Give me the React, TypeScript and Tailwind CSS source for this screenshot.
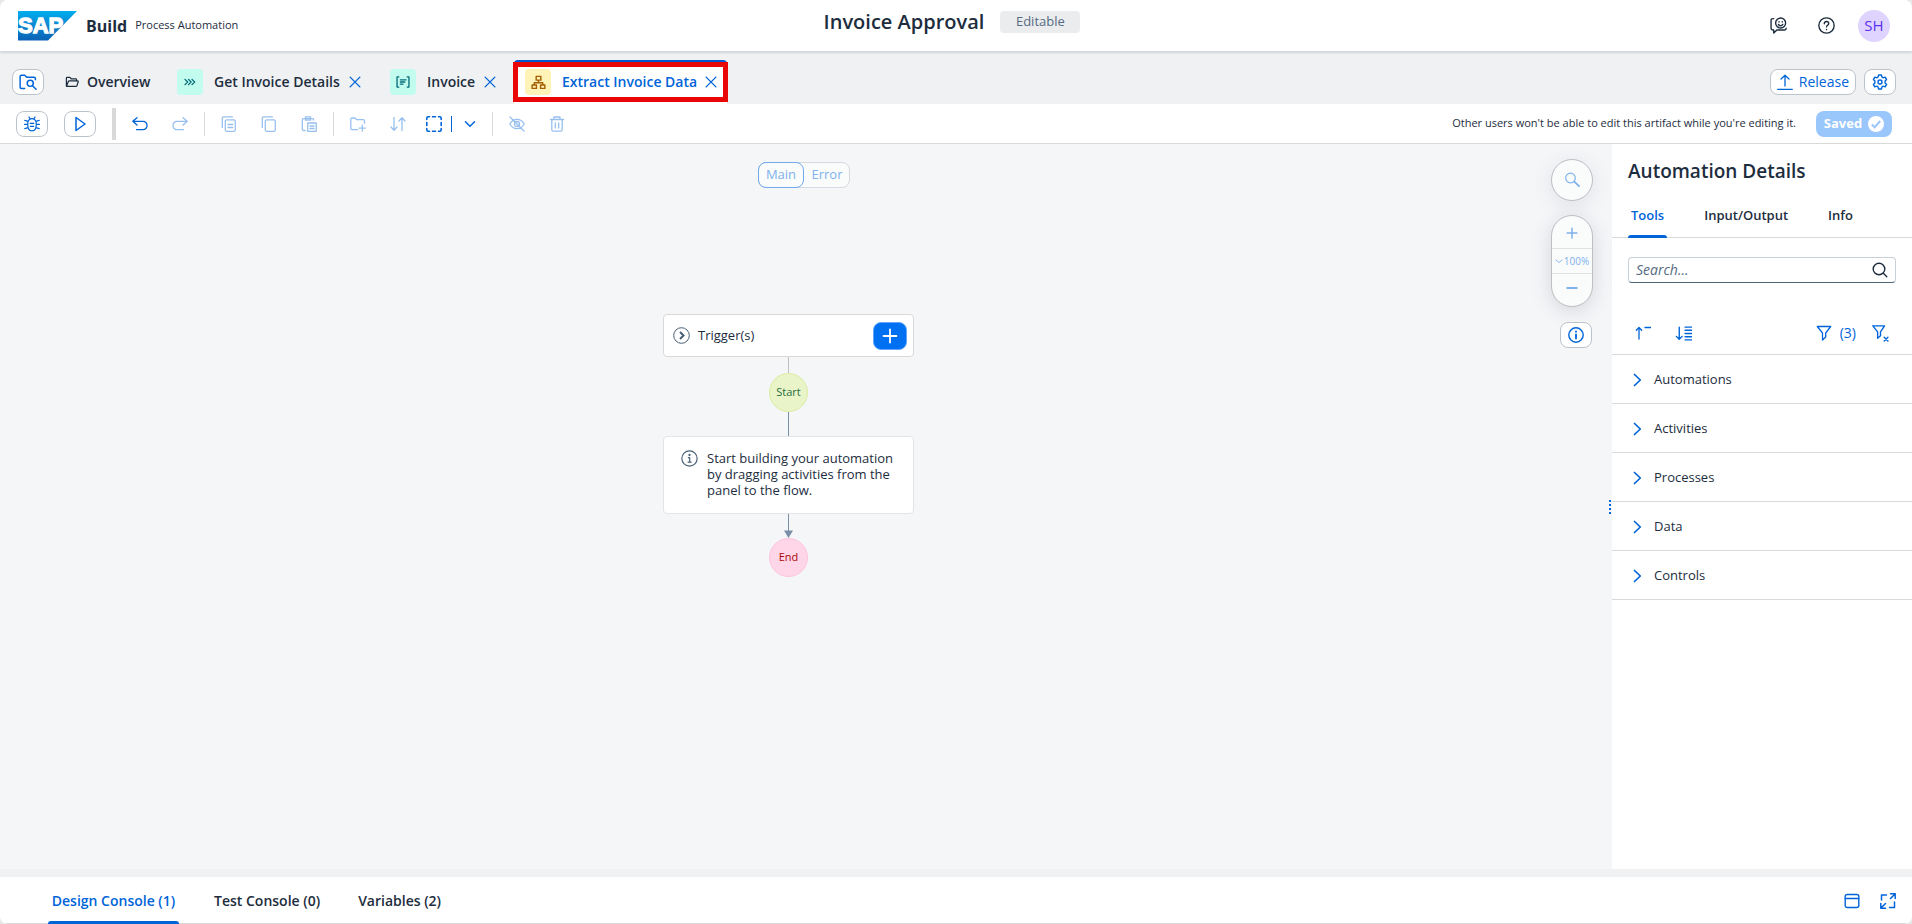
import type { ReactNode } from 'react'

type IconProps = { className?: string; width?: number; children: ReactNode }

function Icon({ className = 'size-4', width = 1.3, children }: IconProps) {
  return (
    <svg
      viewBox="0 0 16 16"
      className={`shrink-0 ${className}`}
      fill="none"
      stroke="currentColor"
      strokeWidth={width}
      strokeLinecap="round"
      strokeLinejoin="round"
      aria-hidden="true"
    >
      {children}
    </svg>
  )
}

const CloseIcon = () => (
  <Icon className="size-3" width={1.8}>
    <path d="M1.500 1.500l13 13M14.500 1.500l-13 13" />
  </Icon>
)

const FolderSearchIcon = () => (
  <Icon className="size-[18px]">
    <path d="M5 13.700H2.300a1.300 1.300 0 0 1-1.300-1.300V3.200C1 2.500 1.500 2 2.200 2h2.900l1.700 1.700h6.600c.7 0 1.200.5 1.200 1.200v1" />
    <circle cx="10" cy="9.200" r="2.700" />
    <path d="M12 11.300l3.200 3.200" />
  </Icon>
)

const FolderOpenIcon = () => (
  <Icon className="size-[14px]" width={1.4}>
    <path d="M1.600 12.600V3.800c0-.6.4-1 1-1h3l1.400 1.500h5.200c.6 0 1 .4 1 1v1.400" />
    <path d="M1.800 13l2-5.500c.2-.5.5-.7 1-.7h9.600c.6 0 .9.400.7 1l-1.500 4.500c-.2.500-.5.700-1 .700H2.200" />
  </Icon>
)

const ProcessIcon = () => (
  <Icon className="size-[14px]" width={1.5}>
    <path d="M2.300 5L5.300 8l-3 3M6.300 5L9.300 8l-3 3M10.300 5L13.300 8l-3 3" />
  </Icon>
)

const FormIcon = () => (
  <Icon className="size-[14px]" width={1.5}>
    <path d="M3.200 2.200H1.200v11.600h2M12.800 2.200h2v11.600h-2M5 5.500h6.500M5 8h5M5 10.500h3" />
  </Icon>
)

const HierarchyIcon = () => (
  <Icon className="size-[15px]" width={1.5}>
    <path d="M5.500 1.500h5v4h-5zM1.200 10.700h4.600v3.600H1.200zM10.200 10.700h4.600v3.600h-4.600zM8 5.500v2.700M3.500 10.700V8.200h9v2.500" />
  </Icon>
)

const SearchIcon = () => (
  <Icon width={1.4}>
    <circle cx="7" cy="7" r="5.800" />
    <path d="M11.300 11.300l3.500 3.500" />
  </Icon>
)

const InfoIcon = ({ className = 'size-4' }: { className?: string }) => (
  <Icon className={className} width={1.1}>
    <circle cx="8" cy="8" r="7.200" />
    <path d="M7 7.200h1.200v4M6.600 11.400h3" />
    <circle cx="8" cy="4.600" r=".5" fill="currentColor" />
  </Icon>
)

const ChevronRight = () => (
  <Icon className="size-4" width={1.7}>
    <path d="M5.500 2.500L11.300 8l-5.800 5.500" />
  </Icon>
)

function SapLogo() {
  return (
    <svg viewBox="0 0 60 30" className="h-[30px] w-[60px]" role="img" aria-label="SAP">
      <defs>
        <linearGradient id="sap" x1="0" y1="0" x2="0" y2="1">
          <stop offset="0" stopColor="#00aeef" />
          <stop offset="0.500" stopColor="#0d85d0" />
          <stop offset="1" stopColor="#0a62b5" />
        </linearGradient>
      </defs>
      <path d="M0 0h59L30 29.500H0z" fill="url(#sap)" />
      <text
        x="0"
        y="22"
        fill="#fff"
        stroke="#fff"
        strokeWidth="1.300"
        fontFamily="Liberation Sans, sans-serif"
        fontWeight="700"
        fontSize="22"
      >
        SAP
      </text>
    </svg>
  )
}

function OutlineButton({ label, children }: { label: string; children: ReactNode }) {
  return (
    <button
      aria-label={label}
      className="flex h-[26px] w-8 shrink-0 items-center justify-center rounded-lg border border-[#bcc3ca] bg-white text-[#0064d9]"
    >
      {children}
    </button>
  )
}

function ToolButton({ label, disabled, children }: { label: string; disabled?: boolean; children: ReactNode }) {
  return (
    <button
      aria-label={label}
      disabled={disabled}
      className="flex h-[26px] w-8 items-center justify-center text-[#0064d9] disabled:opacity-40"
    >
      {children}
    </button>
  )
}

const Divider = () => <span className="h-6 w-px bg-[#d9d9d9]" />

function Header() {
  return (
    <header className="z-10 grid h-[51px] grid-cols-[1fr_auto_1fr] bg-white shadow-[0_2px_2px_#d1d7dc]">
      <div className="flex items-center pl-[18px]">
        <SapLogo />
        <span className="ml-2 text-base font-bold">Build</span>
        <span className="ml-2 text-[11px]">Process Automation</span>
      </div>
      <div className="flex h-11 items-center gap-4 pr-2">
        <h1 className="text-xl font-semibold">Invoice Approval</h1>
        <span className="flex h-[22px] w-20 items-center justify-center rounded bg-[#eaecee] text-[13px] text-[#556b82]">
          Editable
        </span>
      </div>
      <div className="flex items-center justify-end gap-6 pr-[22px]">
        <button aria-label="Feedback" className="flex w-6 justify-center">
          <Icon className="size-[17px]">
            <path d="M3.500 1.500H2.700C1.700 1.500 1 2.200 1 3.200v7.300c0 1 .7 1.700 1.700 1.700h.8v2.900l3-2.900h7.300c.8 0 1.400-.6 1.400-1.300v-.4" />
            <circle cx="10" cy="5.700" r="4.700" />
            <path d="M8 7c.5.9 1.200 1.300 2 1.300S11.500 7.900 12 7M8.500 4.400v.3M11.500 4.400v.3" />
          </Icon>
        </button>
        <button aria-label="Help" className="flex w-6 justify-center">
          <Icon className="size-[17px]">
            <circle cx="8" cy="8" r="7.200" />
            <path d="M5.900 6.300c0-1.300.9-2.100 2.100-2.100s2.100.8 2.100 1.900c0 1.600-2.100 1.600-2.100 3.200M8 11.700v.2" />
          </Icon>
        </button>
        <button className="-ml-1 size-8 rounded-full bg-[#dfd3ff] text-[15px] font-medium text-[#5b30f0]">SH</button>
      </div>
    </header>
  )
}

type TabProps = { title: string; size: string; badge: string; icon: ReactNode; active?: boolean }

function FileTab({ title, size, badge, icon, active }: TabProps) {
  return (
    <div
      className={`relative flex h-[44px] items-center border-t-2 pr-[10px] pb-[2px] pl-[11px] ${size} ${
        active ? 'rounded-t border-[#0057d2] bg-white text-[#0064d9]' : 'border-transparent'
      }`}
    >
      {active && <span className="pointer-events-none absolute top-0 -right-px bottom-[2px] -left-px border-5 border-[#e90606]" />}
      <span className={`mr-[11px] flex size-[26px] shrink-0 items-center justify-center rounded ${badge}`}>{icon}</span>
      <button className="whitespace-nowrap text-sm font-semibold">{title}</button>
      <button aria-label={`Close ${title}`} className="ml-auto text-[#0064d9]">
        <CloseIcon />
      </button>
    </div>
  )
}

function FileTabs() {
  return (
    <nav className="flex h-[53px] items-end bg-[#eff1f2] pr-4 pl-3">
      <div className="flex h-[44px] items-center">
        <OutlineButton label="Find in project">
          <FolderSearchIcon />
        </OutlineButton>
      </div>
      <button className="ml-[21px] flex h-[44px] w-[101px] items-center gap-2 text-sm font-semibold">
        <FolderOpenIcon />
        Overview
      </button>
      <div className="flex gap-2">
        <FileTab title="Get Invoice Details" size="w-[205px]" badge="bg-[#c2fcee] text-[#046c7a]" icon={<ProcessIcon />} />
        <FileTab title="Invoice" size="w-[127px]" badge="bg-[#c2fcee] text-[#046c7a]" icon={<FormIcon />} />
        <FileTab title="Extract Invoice Data" size="w-[213px]" badge="bg-[#fff3b8] text-[#a45d00]" icon={<HierarchyIcon />} active />
      </div>
      <div className="ml-auto flex h-[44px] items-center gap-2">
        <button className="flex h-[26px] items-center gap-[6px] rounded-lg border border-[#bcc3ca] bg-white px-[6px] text-sm font-medium text-[#0064d9]">
          <Icon>
            <path d="M8 12V1.500M4 5l4-3.700L12 5M.7 15.300h14.600" />
          </Icon>
          Release
        </button>
        <OutlineButton label="Settings">
          <Icon width={1.4}>
            <path d="M6.600 1h2.800l.5 2 1.300.8 2-.6 1.400 2.400-1.500 1.500v1.800l1.500 1.500-1.400 2.400-2-.6-1.300.8-.5 2H6.600l-.5-2-1.300-.8-2 .6-1.400-2.400 1.500-1.500V7.100L1.400 5.600l1.400-2.400 2 .6L6.100 3z" />
            <circle cx="8" cy="8" r="2" />
          </Icon>
        </OutlineButton>
      </div>
    </nav>
  )
}

function Toolbar() {
  return (
    <div className="flex h-10 items-center border-b border-[#d9d9d9] bg-white pr-5 pl-4">
      <div className="flex items-center gap-4">
        <OutlineButton label="Debug">
          <Icon width={1.2}>
            <path d="M4.500 4.500C5 3.300 6.300 2.600 8 2.600s3 .7 3.500 1.900c.6 1 .8 2.200.8 3.700 0 4-1.500 6.600-4.300 6.600s-4.300-2.600-4.300-6.600c0-1.500.2-2.700.8-3.700zM5 1l1 1.700M11 1l-1 1.700M.8 4.300l3.400 1M.6 8.400h3M.8 12.600l3.400-1M15.200 4.300l-3.400 1M15.400 8.400h-3M15.200 12.600l-3.400-1M6.300 7.300h3.400M6.300 10.300h3.400" />
          </Icon>
        </OutlineButton>
        <OutlineButton label="Run">
          <Icon width={1.5}>
            <path d="M4 1.500v13L13 8z" />
          </Icon>
        </OutlineButton>
        <span className="h-8 w-1 bg-[#d9d9d9]" />
      </div>
      <div className="ml-2 flex items-center gap-2">
        <ToolButton label="Undo">
          <Icon>
            <path d="M5 1.700L.8 5.300 5 9M1 5.300h10a4 4 0 0 1 4 4.200 4 4 0 0 1-4 4.200H4.500" />
          </Icon>
        </ToolButton>
        <ToolButton label="Redo" disabled>
          <Icon>
            <path d="M11 1.700l4.200 3.600L11 9M15 5.300H5a4 4 0 0 0-4 4.200 4 4 0 0 0 4 4.200h6.500" />
          </Icon>
        </ToolButton>
        <Divider />
        <ToolButton label="Copy" disabled>
          <Icon>
            <rect x="4.300" y="3.800" width="10" height="11.500" rx="1.500" />
            <path d="M1.300 11.500V2.300c0-.9.600-1.500 1.500-1.500h8.700M7 8.500h4.700M7 11.500h4.700" />
          </Icon>
        </ToolButton>
        <ToolButton label="Duplicate" disabled>
          <Icon>
            <rect x="4.300" y="3.800" width="10" height="11.500" rx="1.500" />
            <path d="M1.300 11.500V2.300c0-.9.600-1.500 1.500-1.500h8.700" />
          </Icon>
        </ToolButton>
        <ToolButton label="Paste" disabled>
          <Icon>
            <path d="M4 14.500H2.800C2 14.500 1.300 14 1.300 13V4c0-.8.5-1.300 1.300-1.300h8.800c.8 0 1.300.5 1.300 1.300M4.500.8h5v3.400h-5zM6.700 7h8.500v8.300H6.700zM9 10h4M9 12.500h4" />
          </Icon>
        </ToolButton>
        <Divider />
        <ToolButton label="New group" disabled>
          <Icon>
            <path d="M7.500 13.700h-5.200c-.9 0-1.500-.5-1.500-1.300V3.200c0-.7.500-1.200 1.200-1.200h3l1.800 1.700h6.500c.7 0 1.200.5 1.200 1.200v2.300M12.300 9.200v6M9.300 12.200h6" />
          </Icon>
        </ToolButton>
        <ToolButton label="Reorder" disabled>
          <Icon>
            <path d="M4 1.500v12.500M1 11l3 3.200L7 11M12 14.500V2M9 5l3-3.200L15 5" />
          </Icon>
        </ToolButton>
        <div className="flex w-[62px] items-center text-[#0064d9]">
          <button aria-label="Select area" className="flex h-[26px] w-6 items-center justify-center">
            <Icon width={1.6}>
              <path d="M.8 3.500V2.300C.8 1.400 1.400.8 2.300.8h1.200M12.500.8h1.200c.9 0 1.500.6 1.500 1.500v1.200M15.200 12.500v1.200c0 .9-.6 1.500-1.500 1.500h-1.200M3.500 15.200H2.300c-.9 0-1.500-.6-1.500-1.500v-1.200M6.500.8h3M6.500 15.200h3M.8 6.500v3M15.200 6.500v3" />
            </Icon>
          </button>
          <span className="ml-[5px] h-4 w-px bg-[#0064d9]" />
          <button aria-label="Selection modes" className="ml-[10px] flex h-[26px] w-4 items-center justify-center">
            <Icon className="size-3" width={2}>
              <path d="M2 5l6 6 6-6" />
            </Icon>
          </button>
        </div>
        <Divider />
        <ToolButton label="Hide" disabled>
          <Icon>
            <path d="M.8 8C2.500 5 5 3.300 8 3.300S13.500 5 15.200 8c-1.700 3-4.200 4.700-7.200 4.700S2.500 11 .8 8zM1 1l14 14" />
            <circle cx="8" cy="8" r="2.500" />
          </Icon>
        </ToolButton>
        <ToolButton label="Delete" disabled>
          <Icon>
            <path d="M1.500 3.500h13M5 3.300V1h6v2.300M2.800 3.700v10c0 .9.600 1.500 1.500 1.500h7.400c.9 0 1.500-.6 1.500-1.500v-10M6.300 7v5M9.700 7v5" />
          </Icon>
        </ToolButton>
      </div>
      <p className="ml-auto text-[11px]">Other users won't be able to edit this artifact while you're editing it.</p>
      <button
        disabled
        className="ml-5 flex h-[26px] w-[76px] items-center justify-center gap-[6px] rounded-lg bg-[#99c6fb] text-[13px] font-bold text-white"
      >
        Saved
        <svg viewBox="0 0 16 16" className="size-4" aria-hidden="true">
          <circle cx="8" cy="8" r="8" fill="#fff" />
          <path d="M3.800 8.500l2.800 2.700L12.200 5" fill="none" stroke="#99c6fb" strokeWidth="2" />
        </svg>
      </button>
    </div>
  )
}

function Canvas() {
  return (
    <main className="relative flex-1 bg-[#f5f6f8]">
      <div className="flex justify-center pt-[18px] pr-1">
        <div className="flex h-[26px] rounded-lg border border-[#d5dae0] bg-[#fafcfb] text-[13px] font-medium text-[#7fb1ec]">
          <button className="-m-px w-[46px] rounded-lg border border-[#72a9ea]">Main</button>
          <button className="w-[46px] pl-[2px]">Error</button>
        </div>
      </div>

      <div className="flex flex-col items-center pt-[126px] pr-[35px]">
        <section className="flex h-[43px] w-[251px] items-center rounded border border-[#d9d9d9] bg-white pr-[6px] pl-[9px] text-[13px]">
          <button aria-label="Expand triggers" className="text-[#475e75]">
            <svg viewBox="0 0 17 17" className="size-[17px]" fill="none" stroke="currentColor" aria-hidden="true">
              <circle cx="8.500" cy="8.500" r="7.800" />
              <path d="M7 5l3.500 3.500L7 12" strokeWidth="2" />
            </svg>
          </button>
          <span className="ml-2">Trigger(s)</span>
          <button
            aria-label="Add trigger"
            className="ml-auto flex h-7 w-[34px] items-center justify-center rounded-lg border border-[#5fa6fa] bg-[#0070f2] text-white"
          >
            <Icon width={1.8}>
              <path d="M8 1.500v13M1.500 8h13" />
            </Icon>
          </button>
        </section>
        <span className="h-4 w-px bg-[#bfbfbf]" />
        <span className="flex size-[39px] items-center justify-center rounded-full border border-[#dceca0] bg-[#eaf4c9] text-[11px] text-[#256f3a]">
          Start
        </span>
        <span className="h-6 w-px bg-[#788fa6]" />
        <section className="flex h-[78px] w-[251px] gap-[9px] rounded border border-[#e2e4e6] bg-white pt-[13px] pl-[17px] text-[13px] leading-4">
          <InfoIcon className="size-[17px] text-[#475e75]" />
          <p className="w-[192px]">Start building your automation by dragging activities from the panel to the flow.</p>
        </section>
        <svg viewBox="0 0 9 24" className="h-6 w-[9px]" aria-hidden="true">
          <path d="M4.500 0v18" stroke="#788fa6" />
          <path d="M0 16.500h9L4.500 24z" fill="#788fa6" />
        </svg>
        <span className="flex size-[39px] items-center justify-center rounded-full border border-[#ffc4dd] bg-[#ffd5e8] text-[11px] text-[#aa0808]">
          End
        </span>
      </div>

      <div className="absolute top-[15px] right-[19px] flex flex-col items-end text-[#7fb1ec]">
        <button
          aria-label="Find in canvas"
          className="flex size-[42px] items-center justify-center rounded-full border border-[#bcbfc3] bg-[#fafcfb] shadow-[0_4px_20px_rgba(60,70,90,0.12)]"
        >
          <Icon width={1.2}>
            <circle cx="6.500" cy="6" r="4.800" />
            <path d="M10.300 9.700l4.700 4.500" strokeWidth="1.800" />
          </Icon>
        </button>
        <div className="mt-[14px] flex h-[92px] w-[42px] flex-col rounded-full border border-[#bcbfc3] bg-[#fafcfb] shadow-[0_4px_20px_rgba(60,70,90,0.18)]">
          <button aria-label="Zoom in" className="flex h-8 items-center justify-center pt-px">
            <Icon className="size-3" width={2}>
              <path d="M8 1.500v13M1.500 8h13" />
            </Icon>
          </button>
          <button className="flex h-[26px] items-center justify-center gap-px border-y border-[#dfe2e5] text-[10px]">
            <Icon className="size-2" width={1.8}>
              <path d="M2 6l6 5 6-5" />
            </Icon>
            100%
          </button>
          <button aria-label="Zoom out" className="flex h-7 items-center justify-center">
            <Icon className="size-3" width={2.5}>
              <path d="M1.500 8h13" />
            </Icon>
          </button>
        </div>
        <div className="mt-[15px] pr-px">
          <OutlineButton label="Canvas information">
            <Icon width={1.4}>
              <circle cx="8" cy="8" r="7.200" />
              <path d="M8 7.500v4M8 4.500v.3" strokeWidth="1.800" />
            </Icon>
          </OutlineButton>
        </div>
      </div>

      <button aria-label="Resize panel" className="absolute top-[356px] right-px flex flex-col gap-[2px]">
        <span className="size-[2px] bg-[#0064d9]" />
        <span className="size-[2px] bg-[#0064d9]" />
        <span className="size-[2px] bg-[#0064d9]" />
        <span className="size-[2px] bg-[#0064d9]" />
      </button>
    </main>
  )
}

const categories = ['Automations', 'Activities', 'Processes', 'Data', 'Controls']

function DetailsPanel() {
  return (
    <aside className="w-[300px] shrink-0 bg-white">
      <h2 className="px-4 pt-[13px] text-[19px] leading-7 font-semibold">Automation Details</h2>
      <div className="mt-[11px] flex h-[42px] gap-[34px] border-b border-[#d9d9d9] px-4 text-[13px] font-semibold">
        <button className="-mb-px flex flex-col justify-between px-[3px] pt-[10px] text-[#0064d9]">
          Tools
          <span className="-mx-[3px] h-[3px] self-stretch rounded-t-sm bg-[#0064d9]" />
        </button>
        <button className="px-[3px] pb-[2px]">Input/Output</button>
        <button className="px-[3px] pb-[2px]">Info</button>
      </div>
      <label className="mx-4 mt-[19px] flex h-[26px] items-center rounded border border-[#c9d0d6] border-b-[#4f6479] pr-[7px] pl-[7px]">
        <input
          type="search"
          aria-label="Search tools"
          placeholder="Search..."
          className="min-w-0 flex-1 bg-transparent text-sm italic outline-none placeholder:text-[#556b82]"
        />
        <SearchIcon />
      </label>
      <div className="mt-[34px] flex h-[38px] items-center border-b border-[#d9d9d9] px-[23px] pb-[5px] text-[#0064d9]">
        <button aria-label="Collapse all">
          <Icon>
            <path d="M4 14V2.700M1.300 5.300L4 2.500l2.700 2.800M10 2.500h6" />
          </Icon>
        </button>
        <button aria-label="Expand all" className="ml-6">
          <Icon className="size-[17px]">
            <path d="M4 2v11.300M1.300 10.700L4 13.500l2.700-2.800M9.500 2h6M9.500 5h6M9.500 8h6M9.500 11h6M9.500 14h6" />
          </Icon>
        </button>
        <button className="ml-auto flex items-center gap-2 text-sm font-medium">
          <Icon>
            <path d="M1.300 1.500h13.400L9.700 8v4l-3.200 3V8z" />
          </Icon>
          (3)
        </button>
        <button aria-label="Clear filters" className="ml-4">
          <Icon className="size-[17px]">
            <path d="M.8.800h11L8 6.500v3.700l-2.700 2.300v-6zM11.500 11.500l3.500 3.500M15 11.500L11.500 15" />
          </Icon>
        </button>
      </div>
      <ul>
        {categories.map((name) => (
          <li key={name} className="border-b border-[#d9d9d9]">
            <button className="flex h-12 w-full items-center gap-[9px] pt-px pl-[17px] text-[13px]">
              <span className="text-[#0064d9]">
                <ChevronRight />
              </span>
              {name}
            </button>
          </li>
        ))}
      </ul>
    </aside>
  )
}

function ConsoleBar() {
  return (
    <footer className="border-t-8 border-[#eff1f2] bg-white">
      <div className="flex h-[47px] border-b border-[#d9d9d9] pr-4 pl-12 text-sm font-semibold">
        <button className="-mb-px flex w-[131px] flex-col items-center justify-between pt-[14px] text-[#0064d9]">
          Design Console (1)
          <span className="h-[3px] w-full rounded-t-sm bg-[#0064d9]" />
        </button>
        <button className="ml-8 px-[3px] pt-px">Test Console (0)</button>
        <button className="ml-8 px-[3px] pt-px">Variables (2)</button>
        <div className="ml-auto flex items-center gap-5 pt-px text-[#0064d9]">
          <button aria-label="Restore panel">
            <Icon width={1.4}>
              <rect x="1.200" y="1.500" width="13.600" height="13" rx="2" />
              <path d="M1.200 5.500h13.600" />
            </Icon>
          </button>
          <button aria-label="Full screen">
            <Icon width={1.5}>
              <path d="M10.500.8h4.700v4.700M15 1l-4.500 4.500M5.500 15.200H.8v-4.700M1 15l4.500-4.500M1.500 7V2h5M14.500 9v5.500h-5" />
            </Icon>
          </button>
        </div>
      </div>
    </footer>
  )
}

export default function App() {
  return (
    <div className="min-h-screen bg-[#e6e8ea]">
      <div className="flex min-h-screen flex-col overflow-hidden rounded-lg bg-white font-['Open_Sans',sans-serif] text-[#1d2d3e]">
        <Header />
        <FileTabs />
        <Toolbar />
        <div className="flex flex-1">
          <Canvas />
          <DetailsPanel />
        </div>
        <ConsoleBar />
      </div>
    </div>
  )
}
